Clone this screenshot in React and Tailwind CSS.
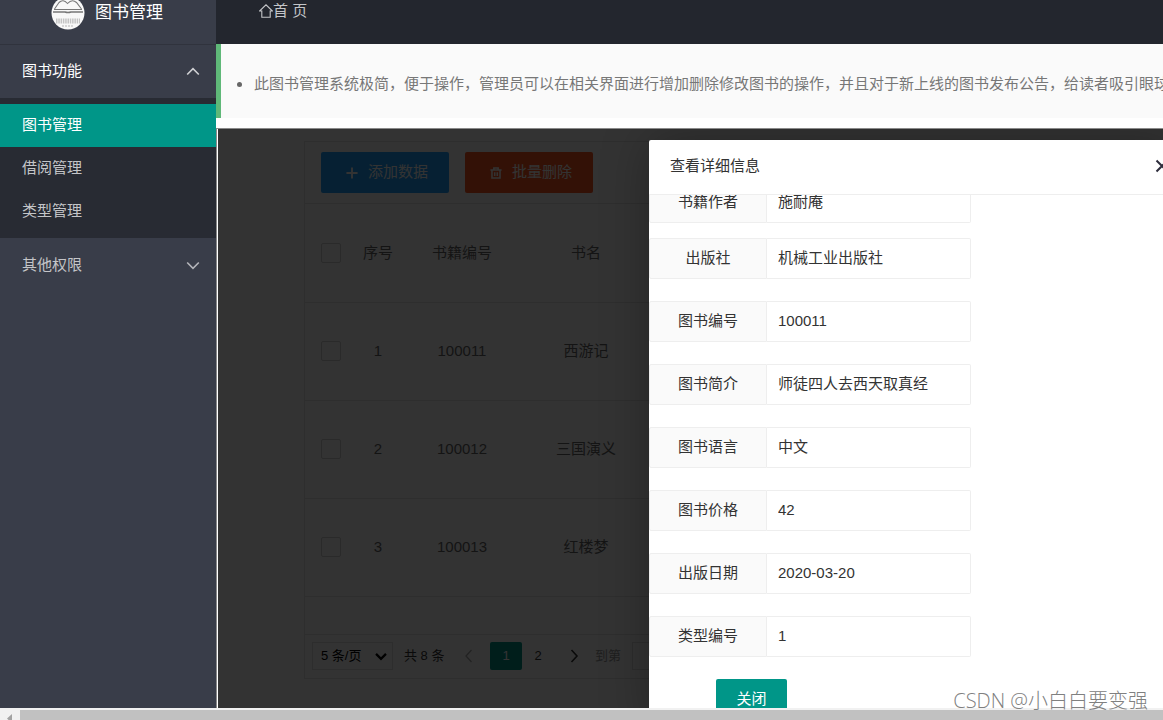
import React from "react";

const books = [
  { no: 1, code: "100011", name: "西游记" },
  { no: 2, code: "100012", name: "三国演义" },
  { no: 3, code: "100013", name: "红楼梦" },
];

const details = [
  { id: "publisher", label: "出版社", value: "机械工业出版社" },
  { id: "code", label: "图书编号", value: "100011" },
  { id: "intro", label: "图书简介", value: "师徒四人去西天取真经" },
  { id: "language", label: "图书语言", value: "中文" },
  { id: "price", label: "图书价格", value: "42" },
  { id: "date", label: "出版日期", value: "2020-03-20" },
  { id: "type", label: "类型编号", value: "1" },
];

function Chevron({ className, d, width = 1.3 }) {
  return (
    <svg viewBox="0 0 14 14" className={className} fill="none" stroke="currentColor" strokeWidth={width} aria-hidden="true">
      <path d={d} />
    </svg>
  );
}

const UP = "M1.2 9.5 L7 3.7 L12.8 9.5";
const DOWN = "M1.2 4.5 L7 10.3 L12.8 4.5";
const LEFT = "M9.5 1 L4 7 L9.5 13";
const RIGHT = "M4.5 1 L10 7 L4.5 13";

function Logo() {
  return (
    <svg viewBox="0 0 34 34" className="size-[34px] shrink-0" aria-hidden="true">
      <circle cx="17" cy="17" r="16.5" fill="#f8f8f8" />
      <g fill="none" stroke="#777" strokeWidth="1.1">
        <path d="M3.5 13 L8 6.5 Q12 2.5 16.5 7.5 Q21 2.5 25.5 6.5 L30.5 13" />
        <path d="M3 13.5 H31" strokeWidth="1" />
        <path d="M2 16 H14 Q17 17 20 16 H32" strokeWidth="1.6" />
      </g>
      <path d="M5 25 H29" stroke="#c4c4c4" strokeWidth="5" strokeDasharray="1.5 0.8" />
      <path d="M11 30 H23" stroke="#d6d6d6" strokeWidth="2" strokeDasharray="2 1" />
    </svg>
  );
}

function Sidebar() {
  return (
    <aside className="flex w-[216px] shrink-0 flex-col bg-[#393d49] text-[15px] text-[#c4c5c8]">
      <div className="-mt-5 flex h-16 shrink-0 items-center gap-[10px] pt-px pl-[51px] text-[17px] text-white">
        <Logo />
        <span>图书管理</span>
      </div>
      <nav>
        <button className="flex h-[54px] w-full items-center justify-between border-t border-[#30333d] pr-4 pl-[22px] text-white">
          图书功能
          <Chevron className="size-[14px] text-[#d0d1d4]" d={UP} width={1.6} />
        </button>
        <div className="bg-[#282b33] pt-[6px] pb-[5px]">
          <a href="#books" className="flex h-[43px] items-center bg-[#009688] pl-[22px] text-white">图书管理</a>
          <a href="#loans" className="flex h-[43px] items-center pl-[22px]">借阅管理</a>
          <a href="#types" className="flex h-[43px] items-center pl-[22px]">类型管理</a>
        </div>
        <button className="flex h-[54px] w-full items-center justify-between pr-4 pl-[22px]">
          其他权限
          <Chevron className="size-[14px] text-[#b4b5ba]" d={DOWN} width={1.6} />
        </button>
      </nav>
    </aside>
  );
}

function Check({ label }) {
  return (
    <input
      type="checkbox"
      aria-label={label}
      className="block size-5 appearance-none rounded-xs border border-[#d2d2d2] bg-white"
    />
  );
}

function BookList() {
  return (
    <section className="mt-3 ml-[86px] border border-[#e6e6e6] bg-white text-[15px] text-[#666]">
      <div className="flex h-[62px] items-center gap-4 border-b border-[#e6e6e6] pl-4 text-white">
        <button className="flex h-[41px] w-32 items-center justify-center gap-[10px] rounded-xs bg-[#1e9fff] pl-1">
          <svg viewBox="0 0 14 14" className="size-3" stroke="currentColor" strokeWidth="2.2" aria-hidden="true">
            <path d="M7 0.5 V13.5 M0.5 7 H13.5" />
          </svg>
          添加数据
        </button>
        <button className="flex h-[41px] w-32 items-center justify-center gap-[10px] rounded-xs bg-[#ff5722] pl-1">
          <svg viewBox="0 0 14 14" className="size-3" fill="none" stroke="currentColor" strokeWidth="1.8" aria-hidden="true">
            <path d="M0.5 3.5 H13.5 M4.5 3 V1.2 H9.5 V3 M2.3 4 V12.8 H11.7 V4 M5.5 6 V10.5 M8.5 6 V10.5" />
          </svg>
          批量删除
        </button>
      </div>
      <table className="w-full table-fixed border-collapse text-center">
        <colgroup>
          <col className="w-[51px]" />
          <col className="w-11" />
          <col className="w-[124px]" />
          <col className="w-[124px]" />
          <col />
        </colgroup>
        <thead>
          <tr className="h-[98px] border-b border-[#e6e6e6]">
            <th className="pl-4"><Check label="全选" /></th>
            <th className="font-normal">序号</th>
            <th className="font-normal">书籍编号</th>
            <th className="font-normal">书名</th>
            <td />
          </tr>
        </thead>
        <tbody>
          {books.map((b) => (
            <tr key={b.no} className="h-[98px] border-b border-[#e6e6e6]">
              <td className="pl-4"><Check label={b.name} /></td>
              <td>{b.no}</td>
              <td>{b.code}</td>
              <td>{b.name}</td>
              <td />
            </tr>
          ))}
        </tbody>
      </table>
      <div className="h-[37px]" />
      <div className="flex h-[44px] items-center border-t border-[#e6e6e6] pl-[7px] text-[13px] text-[#333]">
        <div className="relative">
          <select aria-label="每页条数" className="block h-7 w-[81px] appearance-none border border-[#e2e2e2] bg-white pl-2 text-black">
            <option>5 条/页</option>
          </select>
          <Chevron className="pointer-events-none absolute top-2 right-[6px] size-3 text-black" d={DOWN} width={2.6} />
        </div>
        <span className="ml-[11px] w-[41px] whitespace-nowrap">共 8 条</span>
        <button aria-label="上一页" className="ml-[17px] text-[#aaa]"><Chevron className="size-[14px]" d={LEFT} /></button>
        <button className="ml-[14px] h-7 w-8 rounded-xs bg-[#009688] text-white">1</button>
        <button className="w-8">2</button>
        <button aria-label="下一页" className="ml-[13px]"><Chevron className="size-[14px]" d={RIGHT} width={1.6} /></button>
        <label htmlFor="jump" className="ml-[14px] text-[#999]">到第</label>
        <input id="jump" className="ml-[11px] h-7 w-10 border border-[#e2e2e2]" />
      </div>
    </section>
  );
}

function Field({ id, label, value }) {
  return (
    <div className="flex h-[41px]">
      <label htmlFor={id} className="flex w-[118px] items-center justify-center rounded-l-xs border border-[#eee] bg-[#fafafa]">
        {label}
      </label>
      <input
        id={id}
        readOnly
        defaultValue={value}
        className="w-[204px] rounded-r-xs border border-l-0 border-[#eee] bg-white pl-[11px] outline-none"
      />
    </div>
  );
}

function DetailDialog() {
  return (
    <div
      role="dialog"
      aria-labelledby="dialog-title"
      className="absolute top-[11px] -right-4 -bottom-5 left-[431px] flex flex-col rounded-xs bg-white text-[15px] text-[#333] shadow-[1px_1px_50px_rgba(0,0,0,0.3)]"
    >
      <div className="flex h-[55px] shrink-0 items-center justify-between border-b border-[#eee] pr-[10px] pb-[2px] pl-[21px]">
        <h2 id="dialog-title">查看详细信息</h2>
        <button aria-label="关闭窗口">
          <svg viewBox="0 0 14 14" className="size-[14px]" stroke="#2e2d3c" strokeWidth="2" aria-hidden="true">
            <path d="M1.5 1.5 L12.5 12.5 M12.5 1.5 L1.5 12.5" />
          </svg>
        </button>
      </div>
      <div className="min-h-0 flex-1 overflow-hidden">
        <form className="-mt-[13px]">
          <Field id="author" label="书籍作者" value="施耐庵" />
          <div className="mt-[15px] flex flex-col gap-[22px]">
            {details.map((d) => (
              <Field key={d.id} {...d} />
            ))}
            <button type="button" className="ml-[67px] h-[41px] w-[71px] rounded-xs bg-[#009688] text-white">关闭</button>
          </div>
        </form>
      </div>
    </div>
  );
}

export default function App() {
  return (
    <div className="relative flex h-screen flex-col overflow-hidden bg-white font-['Liberation_Sans','Noto_Sans_CJK_SC',sans-serif]">
      <div className="flex min-h-0 flex-1">
        <Sidebar />
        <div className="flex min-w-0 flex-1 flex-col">
          <header className="h-11 shrink-0 overflow-hidden bg-[#23262e]">
            <a href="#home" className="flex h-[22px] items-center pl-[43px] text-[15px] text-[#c4c5c8]">
              <svg viewBox="0 0 14 14" className="size-[14px]" fill="none" stroke="currentColor" strokeWidth="1.1" aria-hidden="true">
                <path d="M2.8 7 H0.6 L7 0.8 L13.4 7 H11.2 V13.2 H2.8 Z" />
              </svg>
              首 页
            </a>
          </header>
          <div className="h-[74px] shrink-0 overflow-hidden border-l-5 border-[#5fb878] bg-[#fafafa]">
            <ul className="flex h-20 list-none items-center pl-4 text-[15px] whitespace-nowrap text-[#777]">
              <li className="flex items-center gap-3">
                <span className="size-[5px] rounded-full bg-[#666]" />
                此图书管理系统极简，便于操作，管理员可以在相关界面进行增加删除修改图书的操作，并且对于新上线的图书发布公告，给读者吸引眼球
              </li>
            </ul>
          </div>
          <main className="mt-[10px] flex min-h-0 flex-1 border-t border-l border-[#8a8a8a] pl-px">
            <div className="relative min-w-0 flex-1 overflow-hidden bg-white">
              <BookList />
              <div className="absolute inset-0 bg-black/80" />
              <DetailDialog />
            </div>
          </main>
        </div>
      </div>
      <div className="flex h-3 shrink-0 border-t-2 border-[#f1f1f1] bg-[#f1f1f1]">
        <svg viewBox="0 0 20 10" className="h-[10px] w-5" aria-hidden="true">
          <path d="M12 4 V10 H8.5 L7 8.5 Z" fill="#a3a3a3" />
        </svg>
        <div className="flex-1 bg-[#c1c1c1]" />
      </div>
      <p className="absolute right-[15px] bottom-[7px] text-[20px] leading-6 font-light text-[#808080] font-['Open_Sans','Noto_Sans_CJK_SC',sans-serif]">
        CSDN @小白白要变强
      </p>
    </div>
  );
}
